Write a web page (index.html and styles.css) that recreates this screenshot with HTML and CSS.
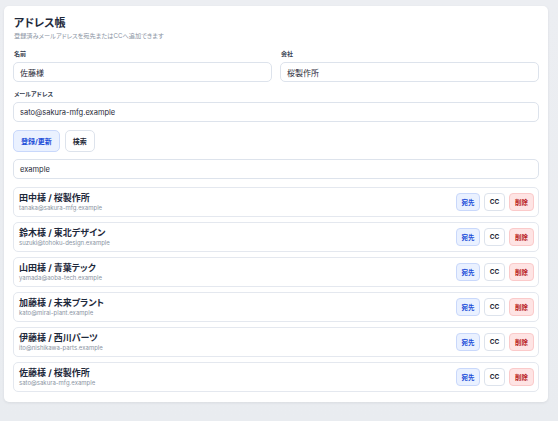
FILE: index.html
```html
<!DOCTYPE html>
<html lang="ja">
<head>
<meta charset="utf-8">
<link rel="stylesheet" href="styles.css">
</head>
<body>
<div class="card">
  <h1 class="title">アドレス帳</h1>
  <p class="sub">登録済みメールアドレスを宛先またはCCへ追加できます</p>
  <div class="row2">
    <div class="field">
      <label class="label">名前</label>
      <div class="input">佐藤様</div>
    </div>
    <div class="field">
      <label class="label">会社</label>
      <div class="input">桜製作所</div>
    </div>
  </div>
  <div class="field mail">
    <label class="label">メールアドレス</label>
    <div class="input latin">sato@sakura-mfg.example</div>
  </div>
  <div class="actions">
    <button class="btn primary">登録/更新</button>
    <button class="btn">検索</button>
  </div>
  <div class="input latin search">example</div>
  <ul class="list">
    <li class="item"><div class="info"><div class="name">田中様 / 桜製作所</div><div class="mailtxt">tanaka@sakura-mfg.example</div></div><div class="ops"><button class="sbtn to">宛先</button><button class="sbtn cc">CC</button><button class="sbtn del">削除</button></div></li>
    <li class="item"><div class="info"><div class="name">鈴木様 / 東北デザイン</div><div class="mailtxt">suzuki@tohoku-design.example</div></div><div class="ops"><button class="sbtn to">宛先</button><button class="sbtn cc">CC</button><button class="sbtn del">削除</button></div></li>
    <li class="item"><div class="info"><div class="name">山田様 / 青葉テック</div><div class="mailtxt">yamada@aoba-tech.example</div></div><div class="ops"><button class="sbtn to">宛先</button><button class="sbtn cc">CC</button><button class="sbtn del">削除</button></div></li>
    <li class="item"><div class="info"><div class="name">加藤様 / 未来プラント</div><div class="mailtxt">kato@mirai-plant.example</div></div><div class="ops"><button class="sbtn to">宛先</button><button class="sbtn cc">CC</button><button class="sbtn del">削除</button></div></li>
    <li class="item"><div class="info"><div class="name">伊藤様 / 西川パーツ</div><div class="mailtxt">ito@nishikawa-parts.example</div></div><div class="ops"><button class="sbtn to">宛先</button><button class="sbtn cc">CC</button><button class="sbtn del">削除</button></div></li>
    <li class="item"><div class="info"><div class="name">佐藤様 / 桜製作所</div><div class="mailtxt">sato@sakura-mfg.example</div></div><div class="ops"><button class="sbtn to">宛先</button><button class="sbtn cc">CC</button><button class="sbtn del">削除</button></div></li>
  </ul>
</div>
</body>
</html>
```
FILE: styles.css
```css
* { box-sizing: border-box; }
html, body { height: 100%; }
body {
  margin: 0;
  padding: 6px 4px;
  background: linear-gradient(180deg, #eceef2 0%, #e9ecf0 100%);
  font-family: "Inter", "Noto Sans CJK JP", sans-serif;
  color: #1f2937;
  font-feature-settings: "palt";
}
.card {
  width: 544px;
  background: #fff;
  border-radius: 5px;
  box-shadow: 0 1px 3px rgba(15, 23, 42, 0.08);
  padding: 10px 9px 10px 9px;
}
.title {
  margin: 0;
  font-size: 11px;
  line-height: 14px;
  font-weight: 700;
  color: #1e293b;
  padding-left: 1px;
}
.sub {
  margin: 1px 0 0;
  font-size: 6.2px;
  line-height: 10px;
  color: #8a94a3;
  padding-left: 1px;
}
.row2 {
  display: grid;
  grid-template-columns: 1fr 1fr;
  gap: 8px;
  margin-top: 9px;
}
.field { display: flex; flex-direction: column; }
.label {
  font-size: 6px;
  line-height: 8px;
  font-weight: 600;
  color: #374151;
  margin-bottom: 4px;
  padding-left: 1px;
}
.input {
  height: 20px;
  border: 1px solid #dde3ec;
  border-radius: 5px;
  padding: 0 6px;
  display: flex;
  align-items: center;
  font-size: 8px;
  color: #1f2937;
  background: #fff;
}
.latin { font-size: 7.5px; }
.mail { margin-top: 8px; }
.actions {
  display: flex;
  gap: 5px;
  margin-top: 8px;
}
.btn {
  height: 22px;
  border: 1px solid #dde3ec;
  border-radius: 5px;
  background: #fff;
  font-family: inherit;
  font-size: 7px;
  font-weight: 700;
  color: #1f2937;
  padding: 0 7px;
}
.btn.primary {
  background: #eaf1ff;
  border-color: #c9d8fb;
  color: #1d4ed8;
}
.search { margin-top: 7px; }
.list {
  list-style: none;
  margin: 8px 0 0;
  padding: 0;
  display: flex;
  flex-direction: column;
  gap: 5px;
}
.item {
  height: 30px;
  border: 1px solid #e4e8ef;
  border-radius: 5px;
  padding: 0 4px 0 5px;
  display: flex;
  align-items: center;
  justify-content: space-between;
}
.info { display: flex; flex-direction: column; }
.name {
  font-size: 9px;
  line-height: 11px;
  font-weight: 700;
  color: #1e293b;
}
.mailtxt {
  font-size: 6px;
  line-height: 9px;
  color: #8a94a3;
}
.ops { display: flex; gap: 4px; }
.sbtn {
  height: 18px;
  padding: 0 4px;
  border: 1px solid #dde3ec;
  border-radius: 4px;
  background: #fff;
  font-family: inherit;
  font-size: 6.5px;
  font-weight: 700;
  color: #1f2937;
  min-width: 21px;
}
.sbtn.to { background: #eaf1ff; border-color: #c9d8fb; color: #1d4ed8; min-width: 24px; }
.sbtn.del { background: #fee4e4; border-color: #fbcaca; color: #b91c1c; min-width: 25px; }
.sbtn.cc { color: #1f2937; }
```
